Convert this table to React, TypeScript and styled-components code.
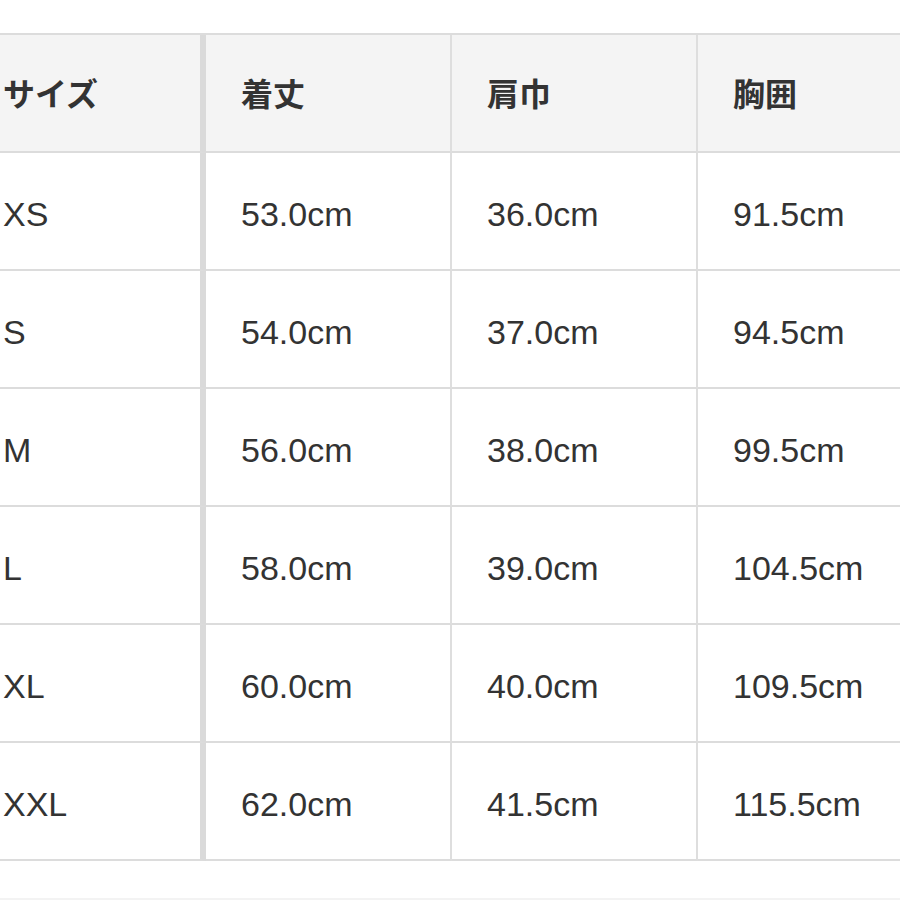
import React from 'react';
import styled, { createGlobalStyle } from 'styled-components';

interface SizeRow {
  size: string;
  length: string;
  shoulder: string;
  chest: string;
}

const headers = ['サイズ', '着丈', '肩巾', '胸囲'];

const rows: SizeRow[] = [
  { size: 'XS', length: '53.0cm', shoulder: '36.0cm', chest: '91.5cm' },
  { size: 'S', length: '54.0cm', shoulder: '37.0cm', chest: '94.5cm' },
  { size: 'M', length: '56.0cm', shoulder: '38.0cm', chest: '99.5cm' },
  { size: 'L', length: '58.0cm', shoulder: '39.0cm', chest: '104.5cm' },
  { size: 'XL', length: '60.0cm', shoulder: '40.0cm', chest: '109.5cm' },
  { size: 'XXL', length: '62.0cm', shoulder: '41.5cm', chest: '115.5cm' },
];

const GlobalStyle = createGlobalStyle`
  body {
    margin: 0;
    background: #ffffff;
    font-family: "Liberation Sans", "Noto Sans CJK JP", sans-serif;
  }
`;

const App = () => {
  return (
    <>
      <GlobalStyle />
      <SPage>
        <STable>
          {headers.map((h, i) => (
            <SHeadCell key={h} first={i === 0}>
              {h}
            </SHeadCell>
          ))}
          {rows.map((row) => (
            <React.Fragment key={row.size}>
              <SCell first>{row.size}</SCell>
              <SCell>{row.length}</SCell>
              <SCell>{row.shoulder}</SCell>
              <SCell>{row.chest}</SCell>
            </React.Fragment>
          ))}
        </STable>
        <SDivider />
      </SPage>
    </>
  );
};

export default App;

const SPage = styled.div`
  width: 900px;
  height: 900px;
  padding-top: 33px;
  box-sizing: border-box;
  overflow: hidden;
`;

const STable = styled.div`
  display: grid;
  grid-template-columns: 238px 246px 246px 260px;
  grid-auto-rows: 118px;
  margin-left: -32px;
  width: max-content;
  border-top: 2px solid #dcdcdc;
`;

const SBaseCell = styled.div<{ first?: boolean }>`
  display: flex;
  align-items: center;
  padding-left: 35px;
  box-sizing: border-box;
  border-bottom: 2px solid #dcdcdc;
  border-right: ${(p) => (p.first ? '6px solid #dadada' : '2px solid #dedede')};
  color: #333333;
`;

const SHeadCell = styled(SBaseCell)`
  background: #f4f4f4;
  font-family: "Noto Sans CJK JP", sans-serif;
  font-weight: 700;
  font-size: 32px;
  padding-bottom: 2px;
`;

const SCell = styled(SBaseCell)`
  background: #ffffff;
  font-family: "Liberation Sans", Arial, sans-serif;
  font-size: 34px;
  padding-top: 6px;
`;

const SDivider = styled.div`
  margin-top: 37px;
  border-top: 2px solid #f3f3f3;
`;
